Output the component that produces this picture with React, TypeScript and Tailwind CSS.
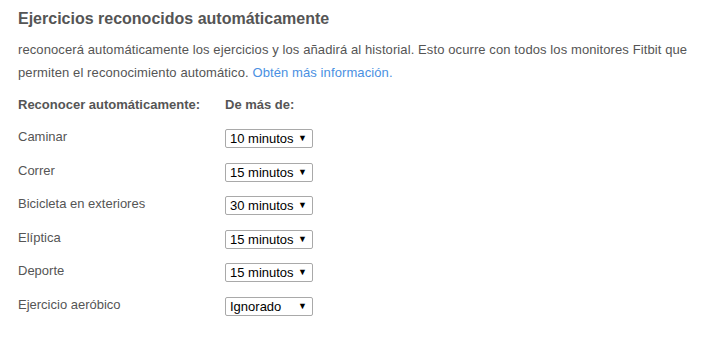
import React from "react";

const rows: [string, string][] = [
  ["Caminar", "10 minutos"],
  ["Correr", "15 minutos"],
  ["Bicicleta en exteriores", "30 minutos"],
  ["Elíptica", "15 minutos"],
  ["Deporte", "15 minutos"],
  ["Ejercicio aeróbico", "Ignorado"],
];

function Select({ value }: { value: string }) {
  return (
    <div className="w-[88px] h-[19px] border border-[#a9a9a9] rounded-[2px] bg-white flex items-center justify-between pl-[4px] pr-[5px] text-[13px] text-black leading-none whitespace-nowrap">
      <span>{value}</span>
      <span className="text-[9px]">▼</span>
    </div>
  );
}

export default function App() {
  return (
    <div className="w-[725px] h-[359px] bg-white pl-[18px] pt-[9px] text-[#555]" style={{ fontFamily: '"Liberation Sans", Arial, sans-serif' }}>
      <h1 className="text-[16px] font-bold text-[#555] leading-[20px]">Ejercicios reconocidos automáticamente</h1>
      <p className="mt-[9px] w-[690px] text-[13px] leading-[23px] tracking-[0.1px]">
        <span>
          reconocerá automáticamente los ejercicios y los añadirá al historial. Esto ocurre con todos los monitores Fitbit que permiten el reconocimiento automático.
        </span>{" "}
        <a href="#" className="text-[#4a90e2]">Obtén más información.</a>
      </p>
      <div className="mt-[11px] flex text-[13px] font-bold leading-[20px]">
        <div className="w-[207px]">Reconocer automáticamente:</div>
        <div>De más de:</div>
      </div>
      <div className="mt-[13px] flex flex-col gap-[13.6px]">
        {rows.map(([label, value]) => (
          <div key={label} className="flex items-start h-[20px]">
            <div className="w-[207px] text-[13px] leading-[18px]">{label}</div>
            <div className="mt-[1px]">
              <Select value={value} />
            </div>
          </div>
        ))}
      </div>
    </div>
  );
}
